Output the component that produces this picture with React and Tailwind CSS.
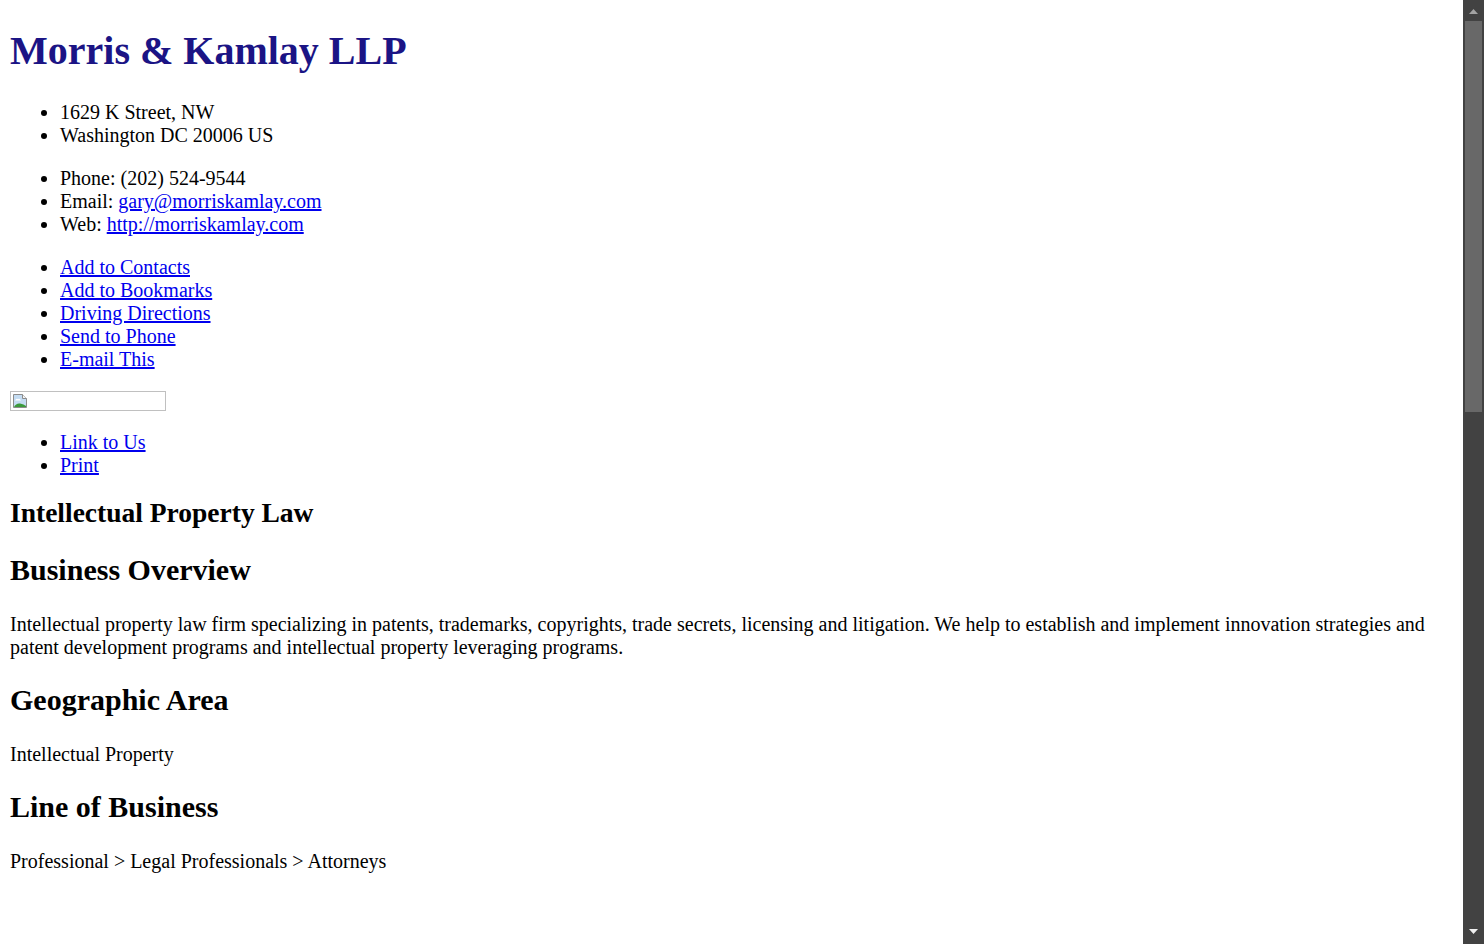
import React from 'react';

const BrokenImage = () => (
  <svg width="16" height="16" viewBox="0 0 16 16" className="block">
    <path d="M1.5 1.5 H10.5 L14.5 5.5 V14.5 H1.5 Z" fill="#c4dcf2" stroke="#8c8c8c" />
    <path d="M10.5 1.5 V5.5 H14.5" fill="#f4f4f4" stroke="#8c8c8c" />
    <path d="M3 7.5 q1 -2.5 3 -1.5 q2 -1 3 1.5 z" fill="#ffffff" />
    <path d="M2 14 Q4 10 8 10.5 Q12 11 14 13 V14 H2 Z" fill="#3c9a3c" />
  </svg>
);

const Heading = ({ children }) => (
  <h2 className="my-[24.8px] text-[30px] font-bold leading-[34.5px]">{children}</h2>
);

const App = () => {
  const address = ['1629 K Street, NW', 'Washington DC 20006 US'];
  const actions = ['Add to Contacts', 'Add to Bookmarks', 'Driving Directions', 'Send to Phone', 'E-mail This'];
  const link = 'text-[#0000ee] underline';

  return (
    <div className="flex h-screen w-full overflow-hidden bg-white font-['Liberation_Serif','Times_New_Roman',serif] text-[20px] leading-[23px] text-black">
      {/* page */}
      <div className="min-w-0 flex-1 overflow-hidden px-[10px]">
        <h1 className="mt-[28px] mb-[27px] text-[40px] font-bold leading-[46px] text-[#1b1485]">Morris &amp; Kamlay LLP</h1>

        <ul className="my-[20px] list-disc pl-[50px]">
          {address.map((a) => (
            <li key={a}>{a}</li>
          ))}
        </ul>

        <ul className="my-[20px] list-disc pl-[50px]">
          <li>Phone: (202) 524-9544</li>
          <li>
            Email: <a href="#" className={link}>gary@morriskamlay.com</a>
          </li>
          <li>
            Web: <a href="#" className={link}>http://morriskamlay.com</a>
          </li>
        </ul>

        <ul className="my-[20px] list-disc pl-[50px]">
          {actions.map((a) => (
            <li key={a}>
              <a href="#" className={link}>{a}</a>
            </li>
          ))}
        </ul>

        <div className="my-[20px] flex h-[20px] w-[156px] items-start border border-[#c0c0c0] pt-[1px] pl-[1px]">
          <BrokenImage />
        </div>

        <ul className="my-[20px] list-disc pl-[50px]">
          <li><a href="#" className={link}>Link to Us</a></li>
          <li><a href="#" className={link}>Print</a></li>
        </ul>

        <h2 className="mt-[20px] mb-[21px] text-[27.5px] font-bold leading-[31.5px]">Intellectual Property Law</h2>

        <Heading>Business Overview</Heading>
        <p className="my-[20px]">
          Intellectual property law firm specializing in patents, trademarks, copyrights, trade secrets, licensing and litigation. We help to establish and implement innovation strategies and patent development programs and intellectual property leveraging programs.
        </p>

        <Heading>Geographic Area</Heading>
        <p className="my-[20px]">Intellectual Property</p>

        <Heading>Line of Business</Heading>
        <p className="my-[20px]">Professional &gt; Legal Professionals &gt; Attorneys</p>
      </div>

      {/* scrollbar */}
      <div className="flex w-[21px] shrink-0 flex-col bg-[#424242]">
        <div className="flex h-[21px] justify-center pt-[9px]">
          <svg width="9" height="5" viewBox="0 0 9 5"><path d="M4.5 0 L9 5 H0 Z" fill="#a3a3a3" /></svg>
        </div>
        <div className="ml-[2px] mr-[2px] h-[391px] bg-[#686868]" />
        <div className="flex-1" />
        <div className="flex h-[22px] justify-center pt-[7px]">
          <svg width="9" height="5" viewBox="0 0 9 5"><path d="M0 0 H9 L4.5 5 Z" fill="#f0f0f0" /></svg>
        </div>
      </div>
    </div>
  );
};

export default App;
